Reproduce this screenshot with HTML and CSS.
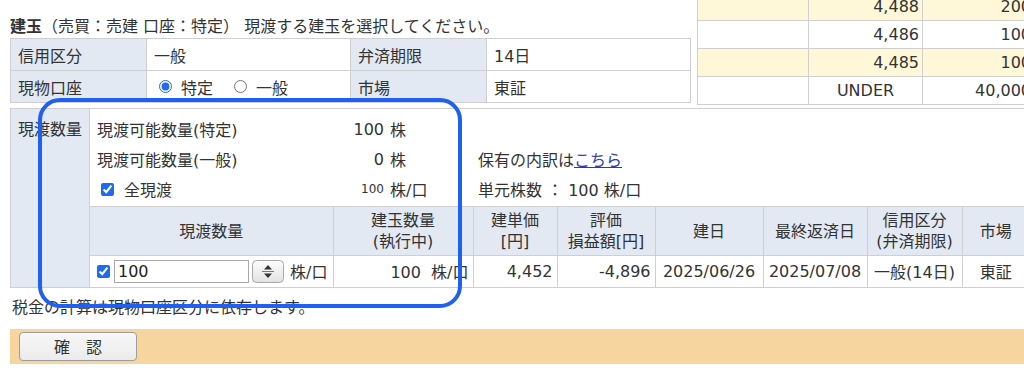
FILE: index.html
```html
<!DOCTYPE html>
<html lang="ja">
<head>
<meta charset="utf-8">
<title>現渡</title>
<link rel="stylesheet" href="styles.css">
</head>
<body>
<div class="page">
  <div class="top">
    <div class="top-left">
      <div class="title"><b>建玉</b>（売買：売建 口座：特定） 現渡する建玉を選択してください。</div>
      <table class="info-table">
        <colgroup><col class="w136"><col class="w204"><col class="w136"><col class="w204"></colgroup>
        <tr><th>信用区分</th><td>一般</td><th>弁済期限</th><td>14日</td></tr>
        <tr><th>現物口座</th><td><label class="radio"><input type="radio" name="acc" checked>特定</label><label class="radio second"><input type="radio" name="acc">一般</label></td><th>市場</th><td>東証</td></tr>
      </table>
    </div>
    <table class="board">
      <colgroup><col class="b1"><col class="b2"><col class="b3"></colgroup>
      <tr class="hl"><td></td><td>4,488</td><td>200</td></tr>
      <tr><td></td><td>4,486</td><td>100</td></tr>
      <tr class="hl"><td></td><td>4,485</td><td>100</td></tr>
      <tr><td></td><td class="c">UNDER</td><td>40,000</td></tr>
    </table>
  </div>

  <div class="order">
    <div class="order-label">現渡数量</div>
    <div class="order-body">
      <div class="qty-grid">
        <div>現渡可能数量(特定)</div><div class="num">100</div><div class="unit">株</div><div></div>
        <div>現渡可能数量(一般)</div><div class="num">0</div><div class="unit">株</div><div>保有の内訳は<a class="link" href="#">こちら</a></div>
        <div class="all"><input type="checkbox" checked>全現渡</div><div class="num small">100</div><div class="unit">株/口</div><div>単元株数 ： 100 株/口</div>
      </div>
      <table class="pos">
        <colgroup><col class="p1"><col class="p2"><col class="p3"><col class="p4"><col class="p5"><col class="p6"><col class="p7"><col class="p8"></colgroup>
        <tr>
          <th>現渡数量</th>
          <th>建玉数量<br>(執行中)</th>
          <th>建単価<br>[円]</th>
          <th>評価<br>損益額[円]</th>
          <th>建日</th>
          <th>最終返済日</th>
          <th>信用区分<br>(弁済期限)</th>
          <th>市場</th>
        </tr>
        <tr>
          <td class="qty-cell"><div class="qty-input"><input type="checkbox" checked><input class="num-input" type="text" value="100"><span class="spinner"><svg width="32" height="23" viewBox="0 0 32 23"><defs><linearGradient id="sg" x1="0" y1="0" x2="0" y2="1"><stop offset="0" stop-color="#fdfdfd"/><stop offset="1" stop-color="#e2e2e2"/></linearGradient></defs><rect x="0.5" y="0.5" width="31" height="22" rx="4" fill="url(#sg)" stroke="#a8a8a8"/><path d="M12 9.5 L16 5 L20 9.5 Z" fill="#333"/><line x1="10" y1="11.5" x2="22" y2="11.5" stroke="#777"/><path d="M12 13.5 L16 18 L20 13.5 Z" fill="#333"/></svg></span><span class="qty-unit">株/口</span></div></td>
          <td>100&nbsp;&nbsp;株/口</td>
          <td>4,452</td>
          <td>-4,896</td>
          <td class="c">2025/06/26</td>
          <td class="c">2025/07/08</td>
          <td class="c">一般(14日)</td>
          <td class="c">東証</td>
        </tr>
      </table>
    </div>
  </div>

  <div class="note">税金の計算は現物口座区分に依存します。</div>

  <div class="bar"><button class="confirm" type="button">確　認</button></div>

  <div class="highlight"></div>
</div>
</body>
</html>
```

FILE: styles.css
```css
* { box-sizing: border-box; }
html, body { margin: 0; padding: 0; }
body {
  width: 1024px;
  height: 372px;
  overflow: hidden;
  background: #fff;
  color: #333;
  font-family: "DejaVu Sans", "Noto Sans CJK JP", sans-serif;
  font-size: 16px;
}
.page { position: relative; padding-left: 10px; width: 1060px; }

.top { display: flex; gap: 7px; height: 103px; }
.top-left { width: 680px; flex: none; }
.title { padding-top: 16px; line-height: 22px; height: 38px; white-space: nowrap; }
.title b { font-weight: bold; }

table { border-collapse: collapse; table-layout: fixed; border-spacing: 0; }

.info-table { width: 680px; }
.info-table .w136 { width: 136px; }
.info-table .w204 { width: 204px; }
.info-table th, .info-table td {
  border: 1px solid #cfcfcf;
  height: 32px;
  padding: 0 7px;
  text-align: left;
  font-weight: normal;
  white-space: nowrap;
}
.info-table th { background: #e2e9f2; }

.radio { display: inline-flex; align-items: center; vertical-align: middle; }
.radio input { margin: 0 9px 0 5px; width: 13px; height: 13px; accent-color: #1f6bf0; }
.radio.second input { margin-left: 21px; }

.board { width: 337px; margin-top: -8px; flex: none; }
.board .b1 { width: 111px; }
.board .b2 { width: 114px; }
.board .b3 { width: 112px; }
.board td { border: 1px solid #cfcfcf; height: 28px; padding: 0 3px; text-align: right; white-space: nowrap; }
.board td.c { text-align: center; }
.board tr.hl td { background: #fff8d8; }

.order { display: flex; margin-top: 5px; border: 1px solid #cfcfcf; width: 1020px; }
.order-label {
  width: 79px;
  flex: none;
  background: #e2e9f2;
  border-right: 1px solid #cfcfcf;
  text-align: center;
  padding-top: 10px;
  line-height: 22px;
}
.order-body { flex: 1; min-width: 0; }
.qty-grid {
  display: grid;
  grid-template-columns: 240px 47px 94px 1fr;
  grid-auto-rows: 30px;
  align-items: center;
  padding: 5px 0 2px 7px;
  white-space: nowrap;
}
.qty-grid .num { text-align: right; }
.qty-grid .unit { padding-left: 6px; }
.qty-grid .small { font-size: 12px; }
.qty-grid .all { display: flex; align-items: center; }
.qty-grid .all input { margin: 0 10px 0 4px; width: 13px; height: 13px; accent-color: #1f6bf0; }
.link { color: #2c39b5; text-decoration: underline; }

.pos { width: 939px; }
.pos .p1 { width: 243px; }
.pos .p2 { width: 140px; }
.pos .p3 { width: 84px; }
.pos .p4 { width: 98px; }
.pos .p5 { width: 108px; }
.pos .p6 { width: 104px; }
.pos .p7 { width: 95px; }
.pos .p8 { width: 67px; }
.pos th, .pos td { border-top: 1px solid #cfcfcf; border-left: 1px solid #cfcfcf; }
.pos th:first-child, .pos td:first-child { border-left: none; }
.pos th {
  background: #e2e9f2;
  height: 49px;
  font-weight: normal;
  line-height: 21px;
  text-align: center;
  padding: 0;
}
.pos td { height: 31px; padding: 0 4px 0 2px; text-align: right; white-space: nowrap; }
.pos td.c { text-align: center; padding: 0 1px; }
.pos td.qty-cell { padding: 0; text-align: left; }
.qty-input { display: flex; align-items: center; padding-left: 7px; }
.qty-input input[type="checkbox"] { margin: 0 4px 0 0; width: 13px; height: 13px; accent-color: #1f6bf0; }
.num-input {
  width: 135px;
  height: 23px;
  border: 1px solid #a9a9a9;
  padding: 0 3px;
  font: inherit;
  color: #222;
  background: #fff;
}
.spinner { display: block; width: 32px; height: 23px; margin-left: 3px; }
.spinner svg { display: block; }
.qty-unit { margin-left: 6px; }

.note { margin-top: 9px; line-height: 22px; padding-left: 2px; white-space: nowrap; }

.bar { margin-top: 10px; height: 35px; background: #f6d59e; padding: 3px 9px; width: 1014px; }
.confirm {
  display: block;
  width: 118px;
  height: 29px;
  border: 1px solid #9c9c9c;
  border-radius: 4px;
  background: linear-gradient(#f7f7f7, #ebebeb);
  font: inherit;
  color: #333;
  padding: 0;
}

.highlight {
  position: absolute;
  left: 38px;
  top: 98px;
  width: 424px;
  height: 210px;
  border: 4px solid #1f60f3;
  border-radius: 22px;
  pointer-events: none;
}
```
